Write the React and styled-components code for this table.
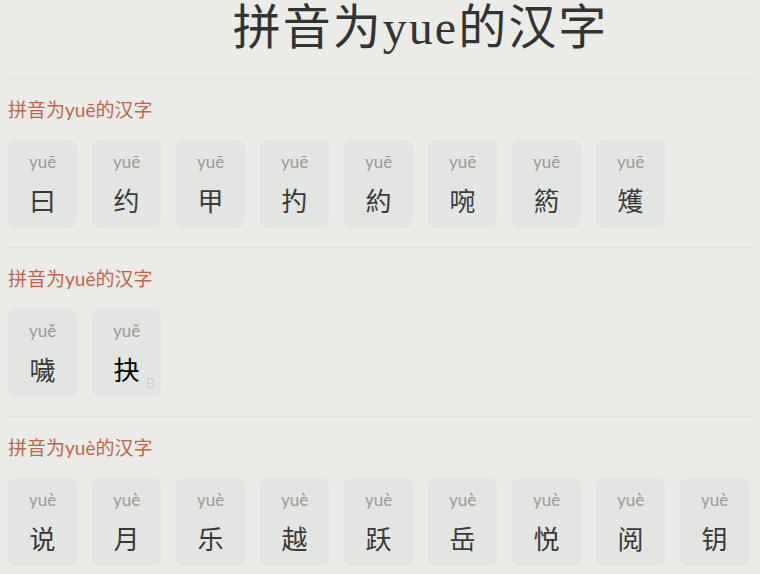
import React from "react";
import styled, { createGlobalStyle } from "styled-components";

const Global = createGlobalStyle`
  html, body { overflow-x: hidden; }
  body {
    margin: 0 8px;
    background: #ebece8;
    font-family: Lato, "Noto Sans CJK SC", sans-serif;
    color: #333;
  }
`;

const Page = styled.div`
  width: 825px;
`;

const Title = styled.h1`
  margin: 0;
  padding: 0 0 22px;
  text-align: center;
  font-family: "Liberation Serif", "Noto Sans CJK SC", serif;
  font-weight: 400;
  font-size: 48px;
  line-height: 56px;
  letter-spacing: 2px;
  color: #333;
`;

const Section = styled.section`
  border-top: 1px solid #dfe0dc;
  padding: 19px 0 19px;
`;

const Heading = styled.h2`
  margin: 0 0 18px;
  font-size: 19px;
  line-height: 24px;
  font-weight: 400;
  color: #c1654a;
  font-family: Lato, "Noto Sans CJK SC", sans-serif;
`;

const Grid = styled.div`
  display: flex;
  flex-wrap: wrap;
  gap: 15px;
`;

const Card = styled.div`
  position: relative;
  box-sizing: border-box;
  width: 69px;
  height: 88px;
  padding-top: 12px;
  border-radius: 8px;
  background: #e3e5e2;
  display: flex;
  flex-direction: column;
  align-items: center;
`;

const Pinyin = styled.div`
  font-family: Lato, sans-serif;
  font-size: 17px;
  line-height: 20px;
  color: #9a9a9a;
`;

const Hanzi = styled.div`
  margin-top: 13px;
  font-family: "Noto Sans CJK SC", sans-serif;
  font-size: 26px;
  line-height: 30px;
  color: ${(p) => (p.$rare ? "#000" : "#3a3a3a")};
`;

const Badge = styled.span`
  position: absolute;
  right: 6px;
  bottom: 7px;
  font-family: Lato, sans-serif;
  font-size: 14px;
  line-height: 14px;
  color: #cfd0cd;
`;

const sections = [
  { py: "yuē", chars: ["曰", "约", "甲", "扚", "約", "啘", "箹", "矱"] },
  { py: "yuě", chars: ["噦", { c: "抉", b: "B" }] },
  { py: "yuè", chars: ["说", "月", "乐", "越", "跃", "岳", "悦", "阅", "钥"] },
];

export default function App() {
  return (
    <Page>
      <Global />
      <Title>拼音为yue的汉字</Title>
      {sections.map((s) => (
        <Section key={s.py}>
          <Heading>拼音为{s.py}的汉字</Heading>
          <Grid>
            {s.chars.map((ch, i) => {
              const c = typeof ch === "string" ? ch : ch.c;
              const b = typeof ch === "string" ? null : ch.b;
              return (
                <Card key={i}>
                  <Pinyin>{s.py}</Pinyin>
                  <Hanzi $rare={!!b}>{c}</Hanzi>
                  {b && <Badge>{b}</Badge>}
                </Card>
              );
            })}
          </Grid>
        </Section>
      ))}
    </Page>
  );
}
